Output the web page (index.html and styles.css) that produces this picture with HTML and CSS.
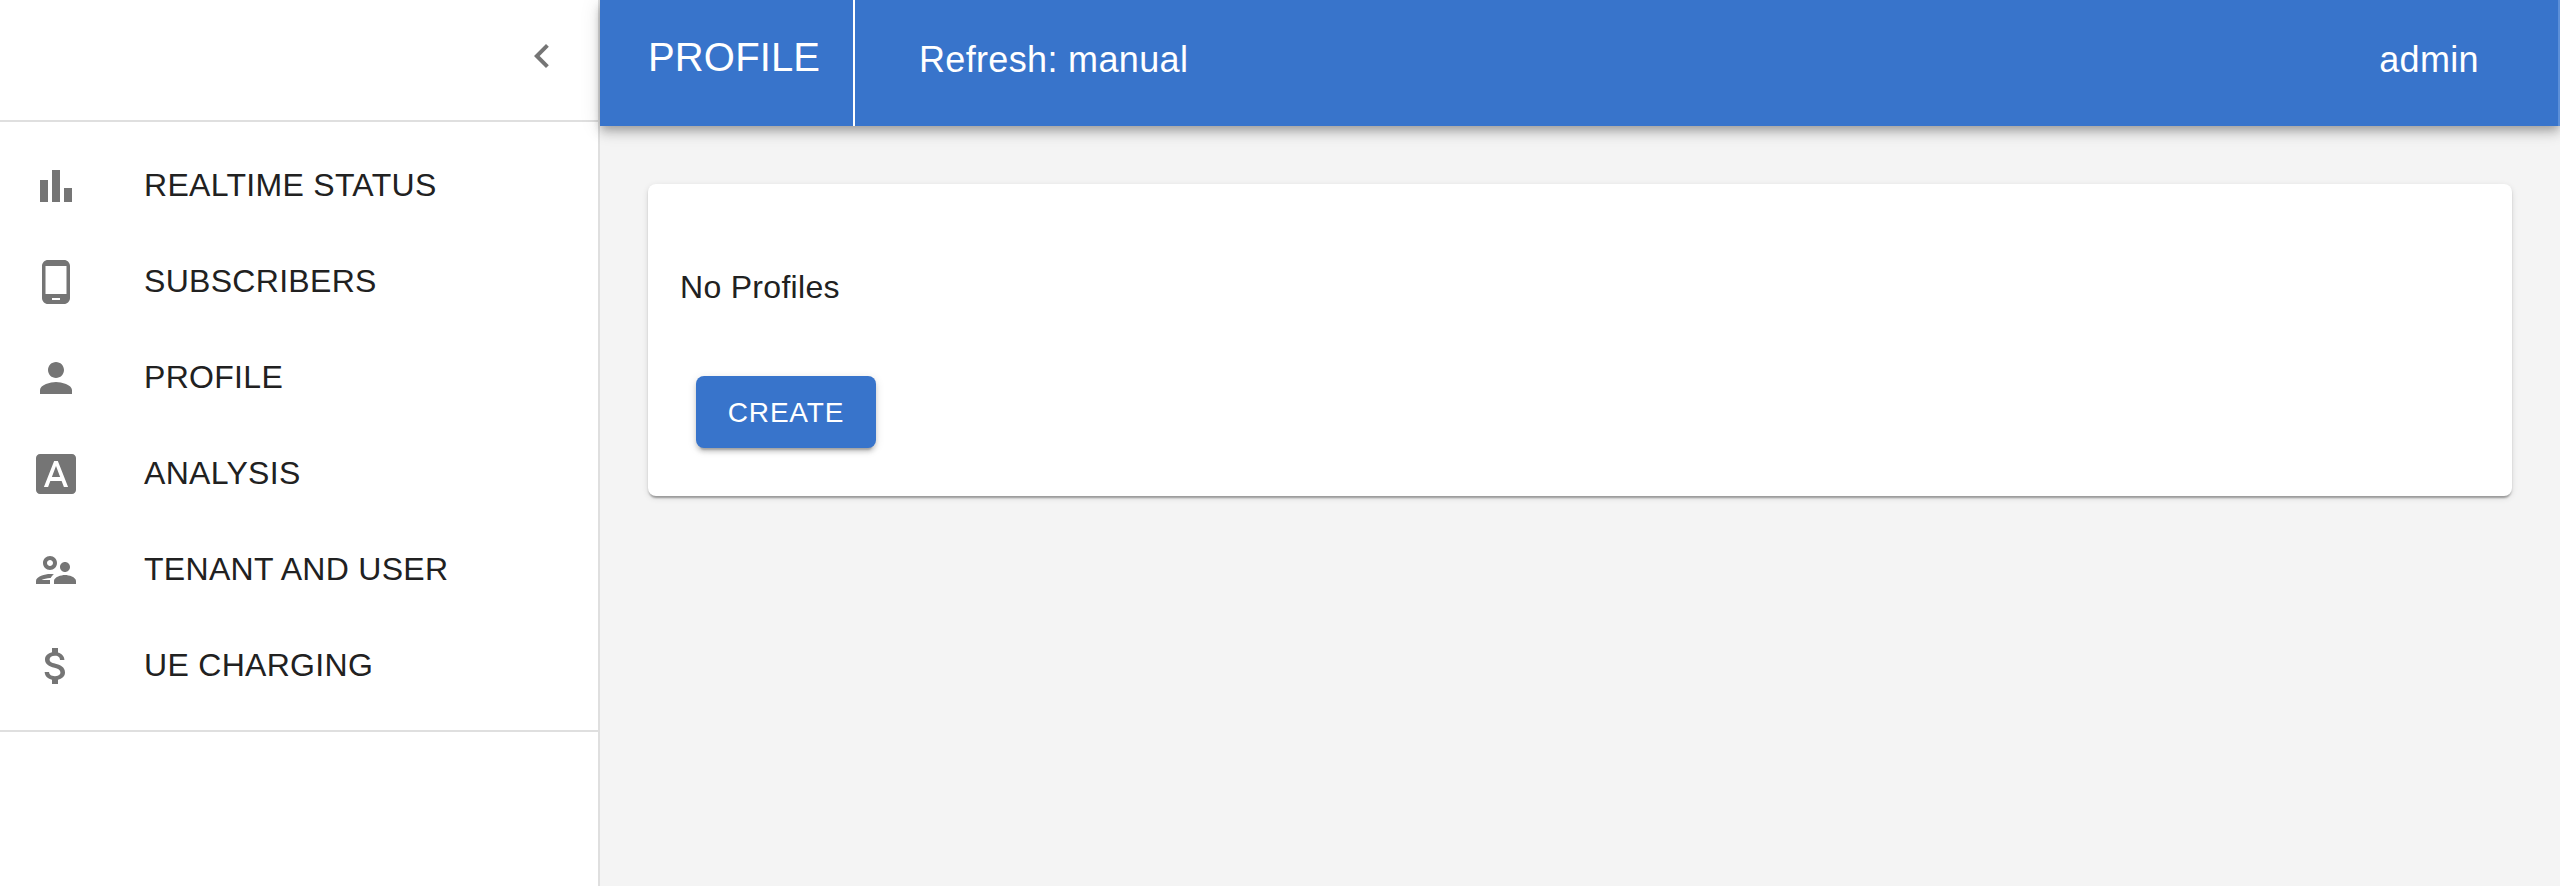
FILE: index.html
```html
<!DOCTYPE html>
<html lang="en">
<head>
<meta charset="utf-8">
<title>Profile</title>
<link rel="stylesheet" href="styles.css">
</head>
<body>
<div class="app">
  <nav class="drawer">
    <div class="drawer-head">
      <button class="collapse" aria-label="Collapse menu"><svg class="icon" viewBox="0 0 24 24"><path d="M15.41 7.41 14 6l-6 6 6 6 1.41-1.41L10.83 12z"/></svg></button>
    </div>
    <ul class="menu">
      <li class="item"><svg class="icon" viewBox="0 0 24 24"><path d="M4 9h4v11H4zm12 4h4v7h-4zm-6-9h4v16h-4z"/></svg><span class="label">REALTIME STATUS</span></li>
      <li class="item"><svg class="icon" viewBox="0 0 24 24"><path d="M16 1H8C6.34 1 5 2.34 5 4v16c0 1.66 1.34 3 3 3h8c1.66 0 3-1.34 3-3V4c0-1.66-1.34-3-3-3zm-2 20h-4v-1h4v1zm3.25-3H6.75V4h10.5v14z"/></svg><span class="label">SUBSCRIBERS</span></li>
      <li class="item"><svg class="icon" viewBox="0 0 24 24"><path d="M12 12c2.21 0 4-1.79 4-4s-1.79-4-4-4-4 1.79-4 4 1.79 4 4 4zm0 2c-2.67 0-8 1.34-8 4v2h16v-2c0-2.66-5.33-4-8-4z"/></svg><span class="label">PROFILE</span></li>
      <li class="item"><svg class="icon" viewBox="0 0 24 24"><path d="M9.93 13.5h4.14L12 7.98zM20 2H4c-1.1 0-2 .9-2 2v16c0 1.1.9 2 2 2h16c1.1 0 2-.9 2-2V4c0-1.1-.9-2-2-2zm-4.05 16.5l-1.14-3H9.17l-1.12 3H5.96l5.11-13h1.86l5.11 13h-2.09z"/></svg><span class="label">ANALYSIS</span></li>
      <li class="item"><svg class="icon" viewBox="0 0 24 24"><path d="M9 12c1.93 0 3.5-1.57 3.5-3.5S10.93 5 9 5 5.5 6.57 5.5 8.5 7.07 12 9 12zm0-5c.83 0 1.5.67 1.5 1.5S9.83 10 9 10s-1.5-.67-1.5-1.5S8.17 7 9 7zm.05 10H4.77c.99-.5 2.7-1 4.23-1 .11 0 .23.01.34.01.34-.67.93-1.33 1.64-1.87-.73-.09-1.42-.14-1.98-.14-2.34 0-7 1.17-7 3.5V19h7v-1.5c0-.17.02-.34.05-.5zm7.45-2.5c-1.84 0-5.5 1.01-5.5 3V19h11v-1.5c0-1.99-3.66-3-5.5-3zM16.5 13c1.38 0 2.5-1.12 2.5-2.5S17.88 8 16.5 8 14 9.12 14 10.5s1.12 2.5 2.5 2.5z"/></svg><span class="label">TENANT AND USER</span></li>
      <li class="item"><svg class="icon" viewBox="0 0 24 24"><path d="M11.8 10.9c-2.27-.59-3-1.2-3-2.15 0-1.09 1.01-1.85 2.7-1.85 1.78 0 2.44.85 2.5 2.1h2.21c-.07-1.72-1.12-3.3-3.21-3.81V3h-3v2.16c-1.94.42-3.5 1.68-3.5 3.61 0 2.31 1.91 3.46 4.7 4.13 2.5.6 3 1.48 3 2.41 0 .69-.49 1.79-2.7 1.79-2.06 0-2.87-.92-2.98-2.1h-2.2c.12 2.19 1.76 3.42 3.68 3.83V21h3v-2.15c1.95-.37 3.5-1.5 3.5-3.55 0-2.84-2.43-3.81-4.7-4.4z"/></svg><span class="label">UE CHARGING</span></li>
    </ul>
  </nav>
  <div class="main">
    <header class="bar">
      <h1 class="title">PROFILE</h1>
      <span class="refresh">Refresh: manual</span>
      <span class="user">admin</span>
    </header>
    <main class="content">
      <section class="card">
        <p class="empty">No Profiles</p>
        <button class="create">CREATE</button>
      </section>
    </main>
  </div>
</div>
</body>
</html>
```
FILE: styles.css
```css
* { box-sizing: border-box; }
body {
  margin: 0;
  height: 886px;
  overflow: hidden;
  background: #f4f4f4;
  color: #212121;
  font: 32px/48px "Liberation Sans", Arial, sans-serif;
  letter-spacing: 0.3px;
}
.app { display: flex; height: 886px; }
.drawer {
  width: 600px;
  flex: none;
  background: #fff;
  border-right: 2px solid #dfdfdf;
}
.drawer-head {
  display: flex;
  justify-content: flex-end;
  height: 122px;
  padding: 16px 16px 0 0;
  border-bottom: 2px solid #dfdfdf;
}
.collapse {
  height: 80px;
  padding: 16px;
  border: 0;
  background: none;
}
.icon { display: block; flex: none; width: 48px; height: 48px; fill: #757575; }
.menu {
  margin: 0;
  padding: 16px 0;
  list-style: none;
  border-bottom: 2px solid #dfdfdf;
}
.item {
  display: flex;
  align-items: center;
  gap: 64px;
  height: 96px;
  padding: 0 32px;
}
.label { padding-bottom: 2px; }
.main { flex: 1; min-width: 0; }
.bar {
  position: relative;
  display: flex;
  height: 126px;
  border-right: 2px solid #5c8fd8;
  background: #3874cb;
  color: #fff;
  box-shadow: 0 4px 8px -2px rgba(0,0,0,.2), 0 8px 10px rgba(0,0,0,.14), 0 2px 20px rgba(0,0,0,.12);
}
.title {
  width: 255px;
  margin: 0;
  padding: 25px 0 0 48px;
  border-right: 2px solid #fff;
  font-size: 40px;
  line-height: 64px;
  font-weight: 400;
  letter-spacing: 0.15px;
}
.refresh, .user { padding-top: 36px; font-size: 36px; letter-spacing: 0.34px; }
.refresh { padding-left: 64px; }
.user { margin-left: auto; padding-right: 79px; }
.content { padding: 58px 48px 0; }
.card {
  height: 312px;
  padding: 79px 32px 0;
  border-radius: 8px;
  background: #fff;
  box-shadow: 0 4px 2px -2px rgba(0,0,0,.2), 0 2px 2px rgba(0,0,0,.14), 0 2px 6px rgba(0,0,0,.12);
}
.empty { margin: 0; }
.create {
  display: block;
  width: 180px;
  height: 72px;
  margin: 65px 0 0 16px;
  padding: 0;
  border: 0;
  border-radius: 8px;
  background: #3874cb;
  color: #fff;
  font: 28px/49px "Liberation Sans", Arial, sans-serif;
  letter-spacing: 0.8px;
  box-shadow: 0 6px 2px -4px rgba(0,0,0,.2), 0 4px 4px rgba(0,0,0,.14), 0 2px 10px rgba(0,0,0,.12);
}
```
